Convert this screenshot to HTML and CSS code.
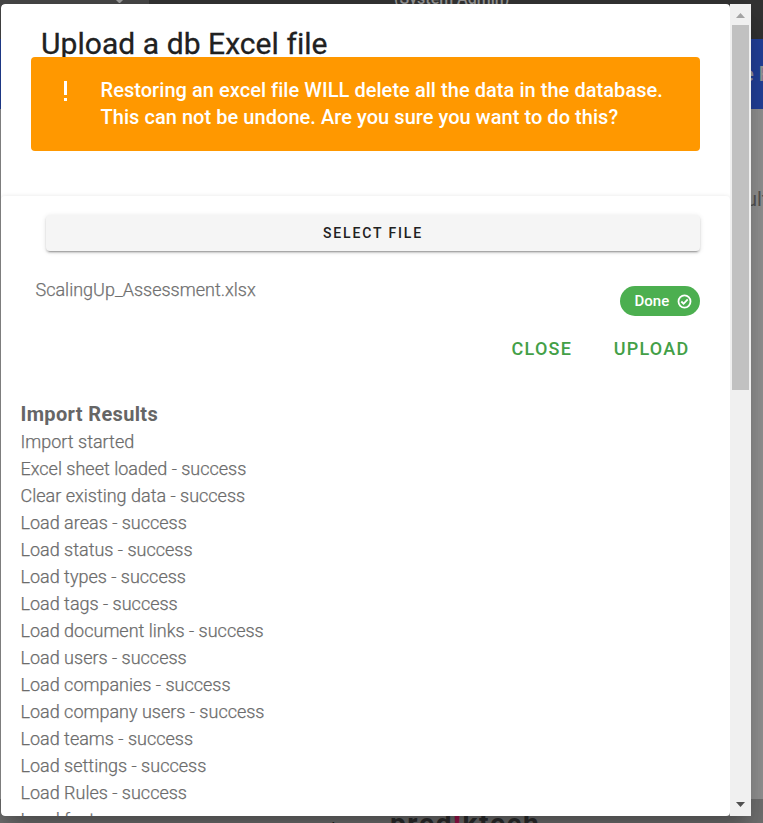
FILE: index.html
```html
<!DOCTYPE html>
<html lang="en">
<head>
<meta charset="utf-8">
<title>Upload a db Excel file</title>
<link rel="stylesheet" href="styles.css">
</head>
<body>
<div class="page">
  <header class="topbar">
    <div class="topbar-menu"><span class="caret"></span></div>
    <div class="role">(System Admin)</div>
  </header>
  <nav class="nav"><span>e R</span></nav>
  <main class="content"><span>ults</span></main>
  <footer class="footer"><span class="by">by</span><span class="brand">pred<b>!</b>ktech</span></footer>
</div>
<div class="dialog">
  <div class="body">
    <section class="intro">
      <h1>Upload a db Excel file</h1>
      <div class="alert">
        <svg class="bang" width="24" height="24" viewBox="0 0 24 24"><path fill="#fff" d="M10 1h3v14h-3zM10 18h3v3h-3z"/></svg>
        <p>Restoring an excel file WILL delete all the data in the database.<br>This can not be undone. Are you sure you want to do this?</p>
      </div>
    </section>
    <section class="card">
      <button class="select">SELECT FILE</button>
      <div class="file">
        <span class="filename">ScalingUp_Assessment.xlsx</span>
        <span class="chip">Done
          <svg width="17" height="17" viewBox="0 0 24 24"><circle cx="12" cy="12" r="8.500" fill="none" stroke="#fff" stroke-width="2.500"/><path d="M7.500 12l3.200 3.200L16.500 9" fill="none" stroke="#fff" stroke-width="2.600"/></svg>
        </span>
      </div>
      <div class="actions"><button>CLOSE</button><button>UPLOAD</button></div>
      <div class="results">
        <h2>Import Results</h2>
        <div>Import started</div>
        <div>Excel sheet loaded - success</div>
        <div>Clear existing data - success</div>
        <div>Load areas - success</div>
        <div>Load status - success</div>
        <div>Load types - success</div>
        <div>Load tags - success</div>
        <div>Load document links - success</div>
        <div>Load users - success</div>
        <div>Load companies - success</div>
        <div>Load company users - success</div>
        <div>Load teams - success</div>
        <div>Load settings - success</div>
        <div>Load Rules - success</div>
        <div>Load fact</div>
      </div>
    </section>
  </div>
  <div class="scrollbar">
    <svg width="21" height="21" viewBox="0 0 21 21"><path d="M6 14l4.500-5 4.500 5z" fill="#a3a3a3"/></svg>
    <div class="thumb"></div>
    <svg class="down" width="21" height="21" viewBox="0 0 21 21"><path d="M6 7l4.500 5 4.500-5z" fill="#505050"/></svg>
  </div>
</div>
</body>
</html>
```

FILE: styles.css
```css
* { box-sizing: border-box; }
body { margin: 0; font-family: Roboto, sans-serif; overflow: hidden; }
h1, h2, p { margin: 0; }
button { font-family: inherit; border: 0; background: none; padding: 0; }

.page { height: 823px; display: flex; flex-direction: column; overflow: hidden; }
.topbar { height: 39px; flex: none; background: #343434; display: flex; }
.topbar-menu { width: 149px; background: #484848; padding-left: 115px; }
.caret { display: block; width: 9px; border: 4px solid transparent; border-top-color: #a0a0a0; margin-top: -1px; }
.role { margin: -11px 0 0 245px; font-size: 16px; line-height: 20px; font-weight: 500; color: #979797; }
.nav { height: 70px; flex: none; background: #2443a0; color: #a0a0a0; font-size: 20px; font-weight: 500; line-height: 70px; padding-left: 743px; white-space: nowrap; }
.content { flex: 1; background: #999; color: #585858; font-size: 20px; padding: 78px 0 0 746px; }
.footer { height: 24px; flex: none; background: #757575; display: flex; white-space: nowrap; }
.by { width: 390px; padding: 20px 42px 0 0; text-align: right; font-size: 16px; line-height: 20px; color: #252525; }
.brand { font-size: 28px; font-weight: 700; line-height: 30px; padding-top: 10px; letter-spacing: 1.600px; color: #303030; }
.brand b { color: #a5144f; }

.dialog { position: absolute; left: 1px; top: 4px; width: 750px; height: 812px; display: flex; overflow: hidden; border-radius: 4px 0 0 4px; box-shadow: 0 11px 15px -7px rgba(0,0,0,.2), 0 24px 38px 3px rgba(0,0,0,.14), 0 9px 46px 8px rgba(0,0,0,.12); }
.body { width: 729px; background: #fff; border-radius: 4px; overflow: hidden; }
.intro { height: 192px; padding: 24px 30px 0; }
h1 { height: 29px; padding-left: 10px; font-size: 30px; line-height: 32px; font-weight: 400; letter-spacing: .06px; -webkit-text-stroke: .3px #212121; color: #212121; }
.alert { position: relative; height: 94px; display: flex; padding: 20px 0 0 23px; border-radius: 4px; background: #ff9800; color: #fff; }
.bang { margin: 3px 22.500px 0 0; }
.alert p { font-size: 20px; line-height: 27px; font-weight: 500; letter-spacing: .05px; white-space: nowrap; }
.card { height: 760px; border-radius: 4px; box-shadow: 0 1px 5px rgba(0,0,0,.15); }
.select { display: block; width: 654px; height: 36px; margin-left: 45px; position: relative; top: 19px; border-radius: 4px; background: #f5f5f5; font-size: 14px; font-weight: 500; letter-spacing: 1.850px; color: #212121; box-shadow: 0 3px 1px -2px rgba(0,0,0,.2), 0 2px 2px rgba(0,0,0,.14), 0 1px 5px rgba(0,0,0,.12); }
.file { display: flex; justify-content: space-between; padding: 44px 30px 0 34.500px; }
.filename { font-size: 18px; line-height: 27px; font-weight: 300; color: #707070; -webkit-text-stroke: .25px #707070; }
.chip { width: 80px; height: 30px; margin-top: 10px; border-radius: 15px; background: #4caf50; color: #fff; font-size: 15px; line-height: 28px; font-weight: 500; display: flex; align-items: center; padding-left: 14.500px; gap: 7px; white-space: nowrap; }
.actions { display: flex; justify-content: flex-end; gap: 41.500px; padding: 18px 40.500px 0 0; }
.actions button { height: 28px; font-size: 18px; font-weight: 500; letter-spacing: 1.250px; color: #43a047; }
.results { padding: 39px 0 0 19.500px; font-size: 18px; line-height: 27px; font-weight: 300; color: #6c6c6c; -webkit-text-stroke: .25px #6c6c6c; }
h2 { font-size: 20px; line-height: 27px; font-weight: 700; letter-spacing: .35px; color: #666; -webkit-text-stroke: 0; }
.scrollbar { width: 21px; background: #f0f0f0; display: flex; flex-direction: column; }
.scrollbar svg { display: block; flex: none; }
.thumb { width: 17px; height: 365px; margin-left: 2px; background: #c1c1c1; }
.scrollbar .down { margin-top: auto; }
```
